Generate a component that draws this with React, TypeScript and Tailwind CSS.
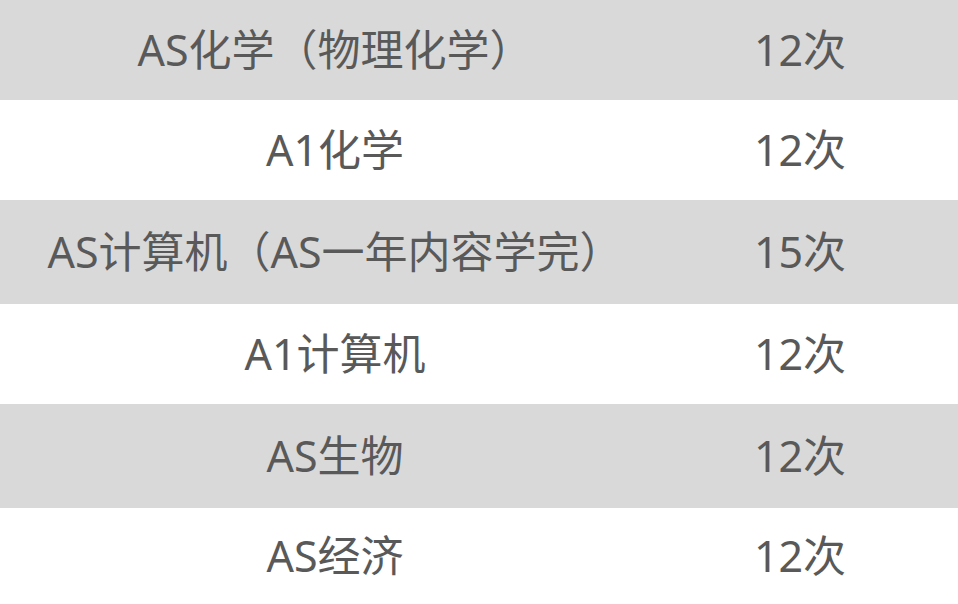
const rows = [
  { name: "AS化学（物理化学）", count: "12次", h: "h-[100px]", gray: true },
  { name: "A1化学", count: "12次", h: "h-[100px]", gray: false },
  { name: "AS计算机（AS一年内容学完）", count: "15次", h: "h-[104px]", gray: true },
  { name: "A1计算机", count: "12次", h: "h-[100px]", gray: false },
  { name: "AS生物", count: "12次", h: "h-[104px]", gray: true },
  { name: "AS经济", count: "12次", h: "h-[96px]", gray: false },
];

export default function App() {
  return (
    <div className="w-[958px] h-[604px] overflow-hidden bg-white font-['Noto_Sans','Noto_Sans_CJK_SC',sans-serif] text-[43px] text-[#595959]">
      {rows.map((row) => (
        <div
          key={row.name}
          className={`grid grid-cols-[670px_260px] items-center ${row.h} ${row.gray ? "bg-[#d9d9d9]" : "bg-white"}`}
        >
          <div className="text-center whitespace-nowrap">{row.name}</div>
          <div className="text-center whitespace-nowrap">{row.count}</div>
        </div>
      ))}
    </div>
  );
}
